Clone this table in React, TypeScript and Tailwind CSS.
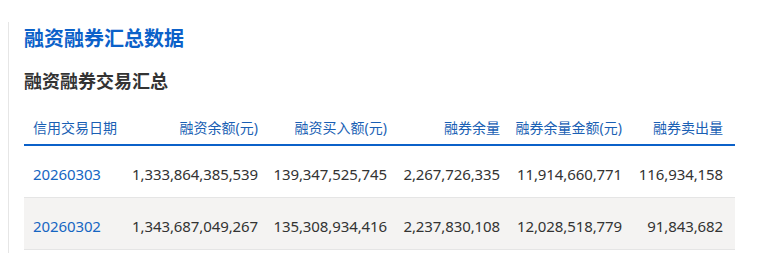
import React from "react";

const cols = "grid grid-cols-[97px_149px_129px_113px_122px_101px]";

const headers = ["信用交易日期", "融资余额(元)", "融资买入额(元)", "融券余量", "融券余量金额(元)", "融券卖出量"];
const rows = [
  ["20260303", "1,333,864,385,539", "139,347,525,745", "2,267,726,335", "11,914,660,771", "116,934,158"],
  ["20260302", "1,343,687,049,267", "135,308,934,416", "2,237,830,108", "12,028,518,779", "91,843,682"],
];

export default function App() {
  return (
    <div
      className="w-[774px] h-[253px] bg-white overflow-hidden pt-[22px] pl-[8px]"
      style={{ fontFamily: '"Noto Sans", "Noto Sans CJK SC", sans-serif' }}
    >
      <div className="border-l border-[#e6e6e6] h-full pl-[15px]">
        <div className="text-[20px] leading-[34px] font-bold text-[#0b61c9]">融资融券汇总数据</div>
        <div className="mt-[11px] text-[18px] leading-[28px] font-bold text-[#333333]">融资融券交易汇总</div>
        <div className="mt-[16px] w-[711px]">
          <div className={`${cols} h-[35px] items-center border-b-2 border-[#0b61c9] text-[14px] text-[#1a5fb4]`}>
            {headers.map((h, i) => (
              <div key={i} className={i === 0 ? "pl-[9px]" : "text-right pr-[12px] whitespace-nowrap"}>
                {h}
              </div>
            ))}
          </div>
          {rows.map((r, ri) => (
            <div
              key={ri}
              className={`${cols} h-[52px] items-center pt-[5px] border-b border-[#e5e5e5] text-[15px] tracking-[-0.1px] text-[#333333] ${ri === 1 ? "bg-[#f4f3f2]" : ""}`}
            >
              {r.map((c, i) => (
                <div key={i} className={i === 0 ? "pl-[9px] text-[#1666c2]" : "text-right pr-[12px] whitespace-nowrap"}>
                  {c}
                </div>
              ))}
            </div>
          ))}
        </div>
      </div>
    </div>
  );
}
